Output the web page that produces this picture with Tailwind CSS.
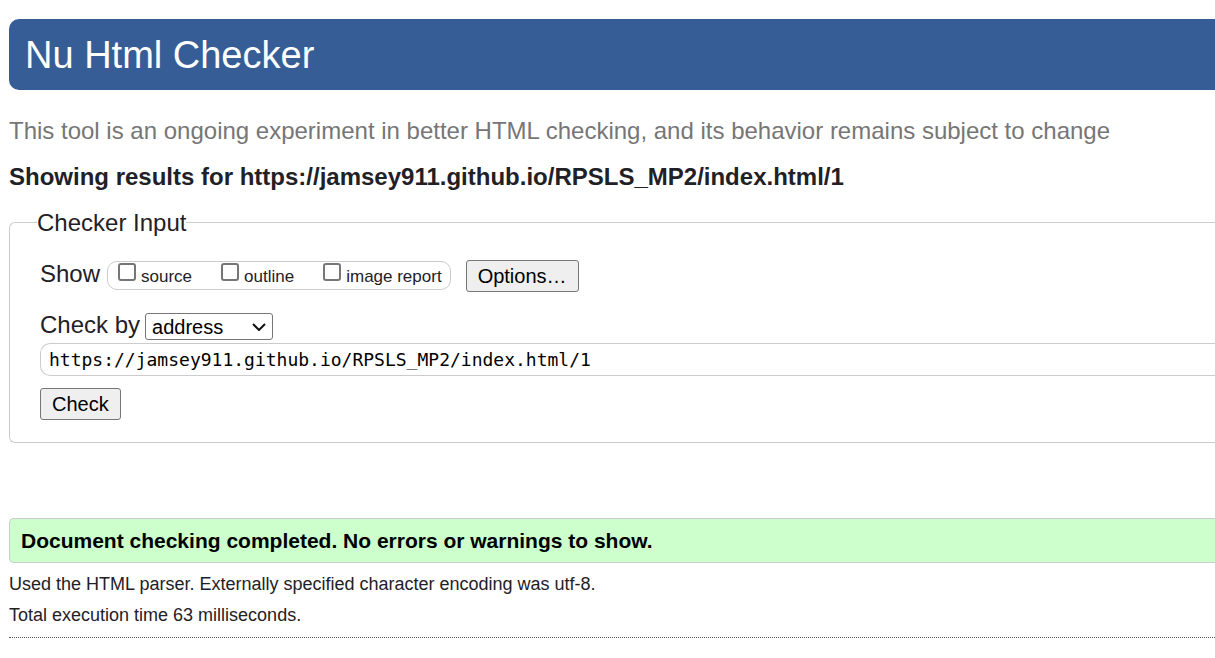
<!DOCTYPE html>
<html lang="en">
<head>
<meta charset="utf-8">
<meta name="viewport" content="width=device-width, initial-scale=1">
<title>Nu Html Checker</title>
<script src="https://cdn.jsdelivr.net/npm/@tailwindcss/browser@4"></script>
</head>
<body class="bg-white pt-[19px] pl-[9px] font-['Liberation_Sans',Arial,sans-serif] text-[#1f2126]">
<header class="flex h-[71px] items-center rounded-l-[10px] bg-[#365d95] px-4">
  <h1 class="text-[38px] leading-10 text-white">Nu Html Checker</h1>
</header>
<main>
  <p class="mt-[26px] text-[24px] leading-[30px] text-[#767676]">This tool is an ongoing experiment in better HTML checking, and its behavior remains subject to change</p>
  <h2 class="mt-4 text-[24px] leading-[30px] font-bold">Showing results for https://jamsey911.github.io/RPSLS_MP2/index.html/1</h2>
  <form onsubmit="return false">
    <fieldset class="mt-4 rounded-l-md border border-r-0 border-[#ccc] pb-[22px] pl-[30px]">
      <legend class="-ml-[3px] text-[24px] leading-[29px]">Checker Input</legend>
      <div class="mt-[23px] flex items-start">
        <span class="text-[24px] leading-7">Show</span>
        <div class="mt-px ml-[7px] flex h-[29px] items-start rounded-[10px] border border-[#ccc] pt-px pr-2 pl-[10px] text-[17px] leading-5">
          <label class="flex items-start gap-[5px]"><input type="checkbox" class="size-[18px] appearance-none rounded-[3px] border-2 border-[#767676] bg-white"><span class="pt-1">source</span></label>
          <label class="ml-[29px] flex items-start gap-[5px]"><input type="checkbox" class="size-[18px] appearance-none rounded-[3px] border-2 border-[#767676] bg-white"><span class="pt-1">outline</span></label>
          <label class="ml-[29px] flex items-start gap-[5px]"><input type="checkbox" class="size-[18px] appearance-none rounded-[3px] border-2 border-[#767676] bg-white"><span class="pt-1">image report</span></label>
        </div>
        <button type="button" class="ml-[15px] h-8 rounded-[3px] border border-[#767676] bg-[#efefef] px-[11px] text-[20px] leading-7 text-black">Options…</button>
      </div>
      <div class="mt-[18px] flex items-end">
        <label for="by" class="text-[24px] leading-[30px]">Check by</label>
        <div class="ml-[5px] grid items-center">
          <select id="by" class="col-start-1 row-start-1 h-[27px] w-32 appearance-none rounded-[3px] border border-[#767676] bg-white pl-[6px] text-[20px] leading-6 text-black"><option>address</option><option>file upload</option><option>text input</option></select>
          <svg class="pointer-events-none col-start-1 row-start-1 mr-[7px] h-2 w-[14px] justify-self-end" viewBox="0 0 14 8" fill="none" stroke="#101010" stroke-width="2"><path d="M1 1 L7 7 L13 1"/></svg>
        </div>
      </div>
      <input type="url" aria-label="Address" value="https://jamsey911.github.io/RPSLS_MP2/index.html/1" class="mt-[3px] block h-[33px] w-full rounded-l-[10px] border border-r-0 border-[#ccc] px-2 font-['DejaVu_Sans_Mono',monospace] text-[18px] text-black">
      <button type="submit" class="mt-3 h-8 rounded-[3px] border border-[#767676] bg-[#efefef] px-[11px] text-[20px] leading-7 text-black">Check</button>
    </fieldset>
  </form>
  <section>
    <p class="mt-[75px] rounded-l-[5px] border border-r-0 border-[#ccc] bg-[#ccffcc] py-[9px] pl-[11px] text-[21px] leading-[25px] font-bold text-black">Document checking completed. No errors or warnings to show.</p>
    <p class="mt-[9px] text-[18px] leading-6">Used the HTML parser. Externally specified character encoding was utf-8.</p>
    <p class="mt-[7px] text-[18px] leading-6">Total execution time 63 milliseconds.</p>
  </section>
  <hr class="mt-[10px] border-t border-dotted border-[#555]">
</main>
</body>
</html>
